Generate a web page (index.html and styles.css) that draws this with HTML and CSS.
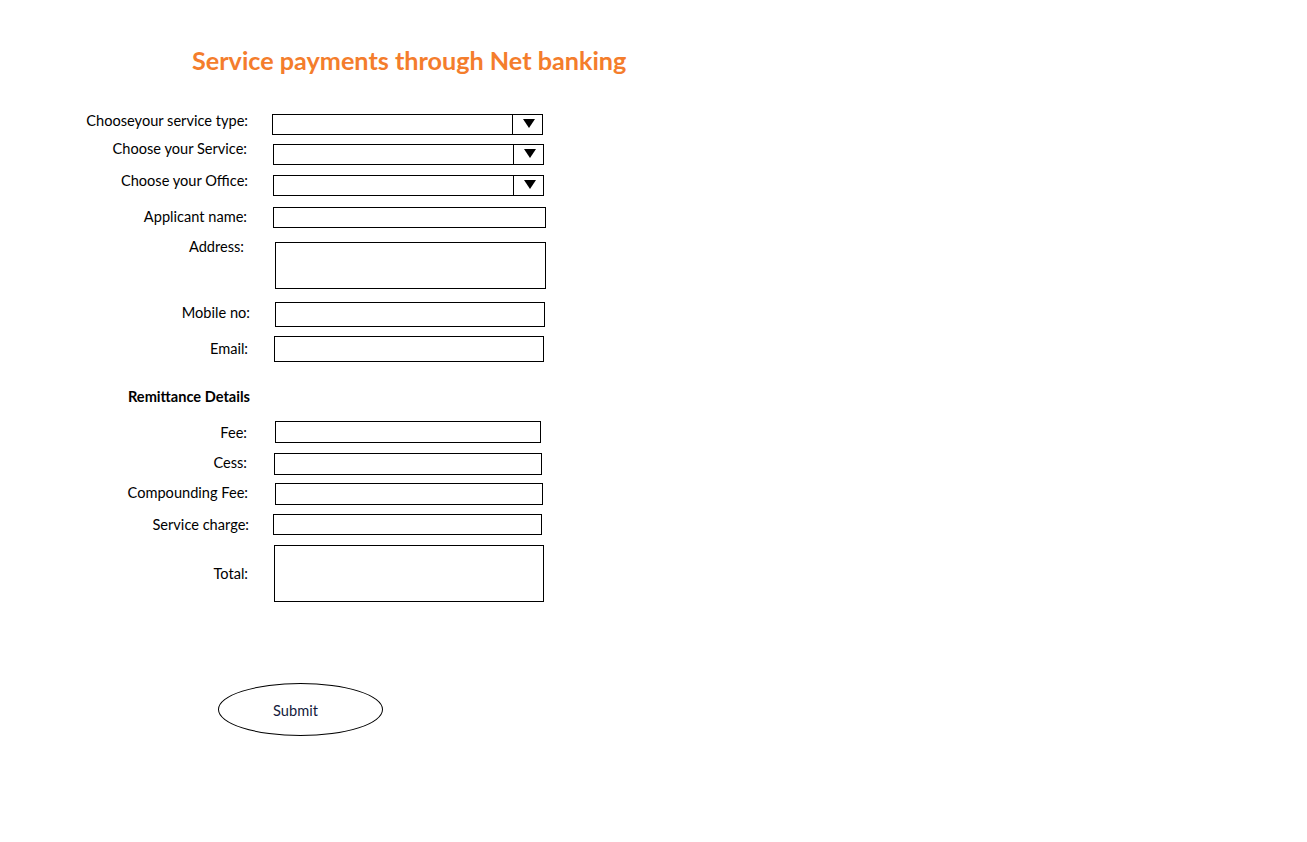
FILE: index.html
```html
<!DOCTYPE html>
<html lang="en">
<head>
<meta charset="utf-8">
<title>Service payments through Net banking</title>
<link rel="stylesheet" href="styles.css">
</head>
<body>
<div class="page">
  <h1 class="title">Service payments through Net banking</h1>

  <form class="form">
    <div class="row f-type">
      <label class="label">Chooseyour service type:</label>
      <div class="box select">
        <span class="select-value"></span>
        <span class="select-btn"><svg width="12" height="9" viewBox="0 0 12 9"><polygon points="0,0 12,0 6,9" fill="#000"/></svg></span>
      </div>
    </div>
    <div class="row f-service">
      <label class="label">Choose your Service:</label>
      <div class="box select">
        <span class="select-value"></span>
        <span class="select-btn"><svg width="12" height="9" viewBox="0 0 12 9"><polygon points="0,0 12,0 6,9" fill="#000"/></svg></span>
      </div>
    </div>
    <div class="row f-office">
      <label class="label">Choose your Office:</label>
      <div class="box select">
        <span class="select-value"></span>
        <span class="select-btn"><svg width="12" height="9" viewBox="0 0 12 9"><polygon points="0,0 12,0 6,9" fill="#000"/></svg></span>
      </div>
    </div>
    <div class="row f-name">
      <label class="label">Applicant name:</label>
      <div class="box"></div>
    </div>
    <div class="row f-address">
      <label class="label">Address:</label>
      <div class="box"></div>
    </div>
    <div class="row f-mobile">
      <label class="label">Mobile no:</label>
      <div class="box"></div>
    </div>
    <div class="row f-email">
      <label class="label">Email:</label>
      <div class="box"></div>
    </div>

    <h2 class="section">Remittance Details</h2>

    <div class="row f-fee">
      <label class="label">Fee:</label>
      <div class="box"></div>
    </div>
    <div class="row f-cess">
      <label class="label">Cess:</label>
      <div class="box"></div>
    </div>
    <div class="row f-compound">
      <label class="label">Compounding Fee:</label>
      <div class="box"></div>
    </div>
    <div class="row f-charge">
      <label class="label">Service charge:</label>
      <div class="box"></div>
    </div>
    <div class="row f-total">
      <label class="label">Total:</label>
      <div class="box"></div>
    </div>

    <div class="submit">Submit</div>
  </form>
</div>
</body>
</html>
```

FILE: styles.css
```css
* { box-sizing: border-box; }

html, body {
  margin: 0;
  padding: 0;
  background: #ffffff;
}

.page {
  padding-top: 46px;
  font-family: Lato, "Open Sans", sans-serif;
  color: #000;
}

.title {
  margin: 0 0 0 192px;
  font-size: 25.2px;
  line-height: 28px;
  font-weight: 700;
  color: #f47d2c;
}

.form {
  margin: 0;
  padding-top: 40px;
}

.row {
  display: flex;
  align-items: flex-start;
}

.label {
  width: 248px;
  flex: none;
  text-align: right;
  font-size: 14.6px;
  line-height: 17px;
  white-space: nowrap;
}

.box {
  flex: none;
  border: 1px solid #000;
  height: 21px;
  width: 271px;
  margin-left: 24px;
}

.select {
  display: flex;
}

.select-value {
  flex: 1;
}

.select-btn {
  width: 30px;
  flex: none;
  border-left: 1px solid #000;
  padding: 4px 0 0 10px;
  display: flex;
  align-items: flex-start;
}

.select-btn svg { display: block; }

/* per-field placement */
.f-type .label { margin-top: -2px; }

.f-service { margin-top: 9px; }
.f-service .label { margin-top: -4px; width: 247px; }
.f-service .box { margin-left: 26px; }

.f-office { margin-top: 10px; }
.f-office .label { margin-top: -3px; }
.f-office .box { margin-left: 25px; }

.f-name { margin-top: 11px; }
.f-name .label { margin-top: 1px; width: 247px; }
.f-name .box { margin-left: 26px; width: 273px; }

.f-address { margin-top: 14px; }
.f-address .label { margin-top: -4px; width: 244px; }
.f-address .box { margin-left: 31px; height: 47px; }

.f-mobile { margin-top: 13px; }
.f-mobile .label { margin-top: 2px; width: 250px; }
.f-mobile .box { margin-left: 25px; height: 25px; width: 270px; }

.f-email { margin-top: 9px; }
.f-email .label { margin-top: 4px; }
.f-email .box { margin-left: 26px; height: 26px; width: 270px; }

.section {
  margin: 26px 0 16px 0;
  width: 250px;
  text-align: right;
  font-size: 14.6px;
  line-height: 17px;
  font-weight: 700;
}

.f-fee .label { margin-top: 3px; width: 247px; }
.f-fee .box { margin-left: 28px; height: 22px; width: 266px; }

.f-cess { margin-top: 10px; }
.f-cess .label { margin-top: 1px; width: 247px; }
.f-cess .box { margin-left: 27px; height: 22px; width: 268px; }

.f-compound { margin-top: 8px; }
.f-compound .label { margin-top: 1px; }
.f-compound .box { margin-left: 27px; height: 22px; width: 268px; }

.f-charge { margin-top: 9px; }
.f-charge .label { margin-top: 2px; width: 249px; }
.f-charge .box { margin-left: 24px; height: 21px; width: 269px; }

.f-total { margin-top: 10px; }
.f-total .label { margin-top: 20px; }
.f-total .box { margin-left: 26px; height: 57px; width: 270px; }

.submit {
  margin: 81px 0 0 218px;
  width: 165px;
  height: 53px;
  border: 1px solid #000;
  border-radius: 50%;
  display: flex;
  align-items: center;
  justify-content: center;
  padding-right: 10px;
  padding-top: 1px;
  font-size: 14.6px;
  color: #141a3c;
}
```
